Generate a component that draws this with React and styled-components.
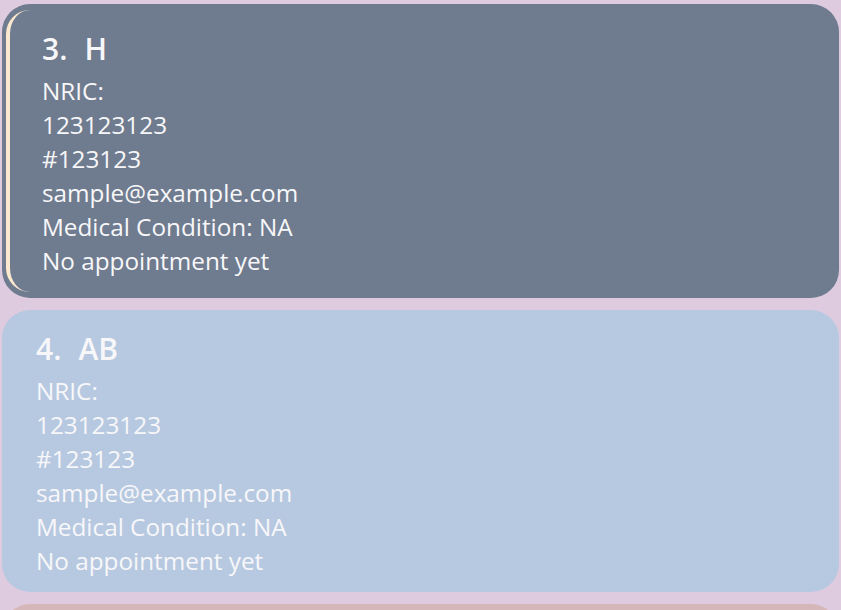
import React from "react";
import styled, { createGlobalStyle } from "styled-components";

const patients = [
  { index: 3, name: "H", nric: "", phone: "123123123", address: "#123123", email: "sample@example.com", condition: "NA", appointment: "No appointment yet", tone: "selected" },
  { index: 4, name: "AB", nric: "", phone: "123123123", address: "#123123", email: "sample@example.com", condition: "NA", appointment: "No appointment yet", tone: "blue" },
  { index: 5, name: "C", nric: "", phone: "123123123", address: "#123123", email: "sample@example.com", condition: "NA", appointment: "No appointment yet", tone: "rose" },
];

const tones = {
  selected: "#6f7b8e",
  blue: "#b7c9e1",
  rose: "#d6b7b9",
};

const App = () => {
  return (
    <>
      <GlobalStyle />
      <List>
        {patients.map((p) => (
          <Card key={p.index} $tone={p.tone}>
            <Inner $selected={p.tone === "selected"}>
              <Title>
                <span>{p.index}.</span>
                <span>{p.name}</span>
              </Title>
              <Line>NRIC: {p.nric}</Line>
              <Line>{p.phone}</Line>
              <Line>{p.address}</Line>
              <Line>{p.email}</Line>
              <Line>Medical Condition: {p.condition}</Line>
              <Line>{p.appointment}</Line>
            </Inner>
          </Card>
        ))}
      </List>
    </>
  );
};

export default App;

const GlobalStyle = createGlobalStyle`
  html, body {
    margin: 0;
    padding: 0;
    background: #dfcbe0;
    overflow: hidden;
  }
  body {
    font-family: "Open Sans", "Noto Sans", sans-serif;
  }
`;

const List = styled.div`
  display: flex;
  flex-direction: column;
  gap: 12px;
  padding: 4px 2px;
`;

const Card = styled.div`
  background-color: ${(p) => tones[p.$tone]};
  border-radius: 28px;
  padding: ${(p) => (p.$tone === "selected" ? "6px 6px 6px 4px" : "0")};
`;

const Inner = styled.div`
  color: #f7f7f9;
  border-left: ${(p) => (p.$selected ? "4px solid #fbe9cf" : "none")};
  border-radius: 24px;
  padding: 21px 20px 14px ${(p) => (p.$selected ? "32px" : "34px")};
`;

const Title = styled.div`
  display: flex;
  gap: 17px;
  font-size: 30px;
  font-weight: 600;
  line-height: 36px;
  margin-bottom: 7px;
`;

const Line = styled.div`
  font-size: 24.3px;
  line-height: 34px;
`;
